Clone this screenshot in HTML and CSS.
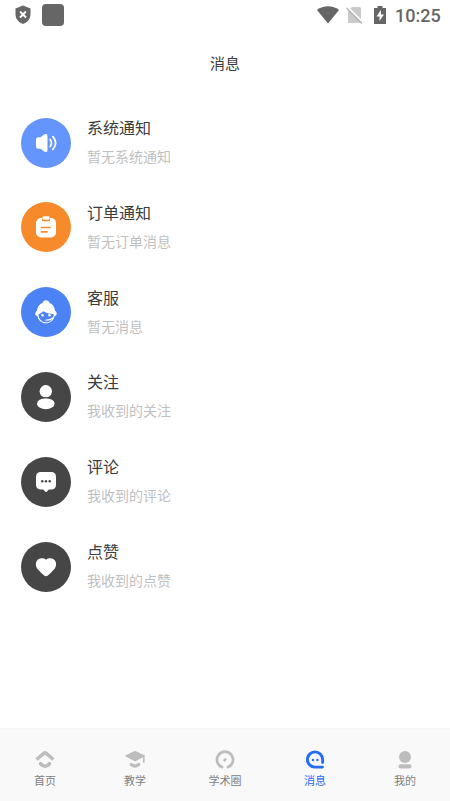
FILE: index.html
```html
<!DOCTYPE html>
<html lang="zh-CN">
<head>
<meta charset="utf-8">
<title>消息</title>
<link rel="stylesheet" href="styles.css">
</head>
<body>
<div class="app">
  <header class="status">
    <svg class="shield" width="18" height="20" viewBox="0 0 18 20"><path d="M9 .5 16.500 3.500V9c0 4.800-3.100 8.600-7.500 10C4.600 17.600 1.500 13.800 1.500 9V3.500Z" fill="#666"/><path d="m6 6.500 6 6m0-6-6 6" stroke="#fff" stroke-width="2"/></svg>
    <span class="block"></span>
    <svg class="wifi" width="22" height="18" viewBox="0 0 22 18"><path d="M0 4C6.500-1 15.500-1 22 4L11 17.500Z" fill="#666"/></svg>
    <svg class="sim" width="17" height="18" viewBox="0 0 17 18"><path d="M6 1h7.500q1.500 0 1.500 1.500V17H2V5Z" fill="#cacaca"/><path d="m1 .7 15.500 15.500" stroke="#fff" stroke-width="2"/><path d="m.5 2 15.500 15.500" stroke="#b4b4b4" stroke-width="1.500"/></svg>
    <svg class="battery" width="12" height="18" viewBox="0 0 12 18"><path d="M3.500 0h5v2H12v16H0V2h3.500Z" fill="#666"/><path d="M7 4 2.500 10.500h3V15L10 8.500H7Z" fill="#fff"/></svg>
    <time class="clock">10:25</time>
  </header>
  <h1 class="title">消息</h1>
  <main class="list">
    <section class="row">
      <svg class="avatar" viewBox="0 0 50 50"><circle cx="25" cy="25" r="25" fill="#6495fd"/><path d="M17.500 19.200h2L23.500 16.300q3-1.300 3 1.700v14q0 3-3 1.700l-4-2.900h-2q-2.500 0-2.500-2.500v-6.600q0-2.500 2.500-2.500Z" fill="#fff"/><path d="M29.200 21.500q2.600 3.500 0 7M31.900 18.700q5.500 6.300 0 12.600" fill="none" stroke="#fff" stroke-width="1.800" stroke-linecap="round"/></svg>
      <div class="text"><h2>系统通知</h2><p>暂无系统通知</p></div>
    </section>
    <section class="row">
      <svg class="avatar" viewBox="0 0 50 50"><circle cx="25" cy="25" r="25" fill="#f78a2b"/><rect x="15" y="16" width="20" height="19.500" rx="5" fill="#fff"/><path d="M21 15.500v2.500q0 1.200 1.200 1.200h5.600q1.200 0 1.200-1.200v-2.500Z" fill="#f78a2b"/><rect x="21.500" y="14.300" width="7" height="3.500" rx="1.200" fill="#fff"/><path d="M20.500 25.500h8.500M20.500 29.800h5.500" stroke="#f78a2b" stroke-width="1.700" stroke-linecap="round"/></svg>
      <div class="text"><h2>订单通知</h2><p>暂无订单消息</p></div>
    </section>
    <section class="row">
      <svg class="avatar" viewBox="0 0 50 50"><circle cx="25" cy="25" r="25" fill="#4b83f5"/><path d="M16.300 29c-3-.8-2.300-4-.3-5.300.3-4 2.500-6.700 5.500-7.700 1-3.600 6-3.600 7 0 3 1 5.200 3.700 5.500 7.700 2 1.300 2.700 4.500-.3 5.300-1 4.300-4.400 7.300-8.700 7.300s-7.700-3-8.700-7.300Z" fill="#fff"/><path d="M17.500 27.300c2-.5 3.500-1.600 4.500-3 3 1.700 6.500 2.500 10.500 2.700.5 4.800-3 8.300-7.500 8.300-4.200 0-7.300-3.300-7.500-8Z" fill="#4b83f5"/><circle cx="21.500" cy="28.300" r="1.300" fill="#fff"/><circle cx="28.500" cy="28.300" r="1.300" fill="#fff"/><path d="M25 33.200q3.800.2 7.200-2.500" fill="none" stroke="#fff" stroke-width="1.200" stroke-linecap="round"/></svg>
      <div class="text"><h2>客服</h2><p>暂无消息</p></div>
    </section>
    <section class="row">
      <svg class="avatar" viewBox="0 0 50 50"><circle cx="25" cy="25" r="25" fill="#464646"/><circle cx="24.800" cy="19.300" r="6.200" fill="#fff"/><ellipse cx="24.800" cy="31.700" rx="8.800" ry="5.500" fill="#fff"/><path d="M18 25.700h14" stroke="#464646" stroke-width=".8"/></svg>
      <div class="text"><h2>关注</h2><p>我收到的关注</p></div>
    </section>
    <section class="row">
      <svg class="avatar" viewBox="0 0 50 50"><circle cx="25" cy="25" r="25" fill="#464646"/><path d="M20 15h10q5 0 5 5v7.500q0 5-5 5h-2.200L25.700 34.700q-.7.700-1.400 0l-2.100-2.200H20q-5 0-5-5V20q0-5 5-5Z" fill="#fff"/><g fill="#464646"><circle cx="21.300" cy="24.300" r="1.200"/><circle cx="25" cy="24.300" r="1.200"/><circle cx="28.700" cy="24.300" r="1.200"/></g></svg>
      <div class="text"><h2>评论</h2><p>我收到的评论</p></div>
    </section>
    <section class="row">
      <svg class="avatar" viewBox="0 0 50 50"><circle cx="25" cy="25" r="25" fill="#464646"/><path d="M25 17.700c3-2.300 7-1.700 8.900.7 2 2.800 1.300 6.600-1 9.200-1.800 2.200-4 4.200-6 5.900q-1.900 1.500-3.800 0c-2-1.700-4.200-3.700-6-5.900-2.300-2.600-3-6.400-1-9.200 1.900-2.400 5.900-3 8.900-.7Z" fill="#fff"/></svg>
      <div class="text"><h2>点赞</h2><p>我收到的点赞</p></div>
    </section>
  </main>
  <nav class="tabs">
    <a class="tab"><svg viewBox="0 0 20 20" fill="none" stroke="#bdbdbd" stroke-width="3.600"><path d="m1.500 9.500 7.300-6.200q1.200-1 2.400 0l7.300 6.200"/><path d="M5.600 13.700q4.400 5 8.800 0" stroke-linecap="round"/></svg><span>首页</span></a>
    <a class="tab"><svg viewBox="0 0 20 20"><path d="M9 1.300q1-.4 2 0l8.300 3.900q1 .6 0 1.200L11 11q-1 .5-2 0L.7 6.400q-1-.6 0-1.200Z" fill="#bdbdbd"/><path d="M18.800 6v6" stroke="#bdbdbd" stroke-width="1.700" stroke-linecap="round"/><path d="M6.300 14.500q3.700 3 7.400 0" fill="none" stroke="#bdbdbd" stroke-width="3.400" stroke-linecap="round"/></svg><span>教学</span></a>
    <a class="tab"><svg viewBox="0 0 20 20" fill="none" stroke="#bdbdbd" stroke-linecap="round"><path d="M7 17.100a8 8 0 1 1 6 0" stroke-width="2.700"/><path d="m9.600 10.200.8-.8" stroke-width="2.700"/></svg><span>学术圈</span></a>
    <a class="tab active"><svg viewBox="0 0 20 20"><path d="M17.600 12.500V9.500a7.600 7.600 0 1 0-7.600 7.600h7.500" fill="none" stroke="#256cf4" stroke-width="2.900" stroke-linecap="round"/><circle cx="7.900" cy="10" r="1.200" fill="#256cf4"/><circle cx="12.400" cy="10" r="1.200" fill="#256cf4"/></svg><span>消息</span></a>
    <a class="tab"><svg viewBox="0 0 20 20" fill="#bdbdbd"><circle cx="10" cy="7" r="6"/><rect x="3.500" y="14.200" width="13" height="4.300" rx="2.100"/></svg><span>我的</span></a>
  </nav>
</div>
</body>
</html>
```
FILE: styles.css
```css
* { box-sizing: border-box; margin: 0; padding: 0; }
body { background: #fff; font-family: "Noto Sans CJK SC", sans-serif; }
.app { width: 450px; height: 801px; display: flex; flex-direction: column; overflow: hidden; }
.status { height: 30px; flex: none; display: flex; align-items: center; padding: 0 10px 0 14px; }
.block { width: 22px; height: 22px; margin-left: 10px; border-radius: 4px; background: #666; }
.wifi { margin-left: auto; }
.sim { margin-left: 7px; }
.battery { margin-left: 11px; }
.clock { margin: 2px 0 0 9px; font: 500 18px/28px Roboto, sans-serif; color: #666; width: 45px; white-space: nowrap; }
.title { height: 66px; flex: none; font-size: 15px; font-weight: 400; line-height: 66px; text-align: center; color: #3c3c3c; }
.list { flex: 1; padding: 4.1px 21px 0; }
.row { height: 84.9px; display: flex; align-items: center; }
.avatar { width: 50px; height: 50px; flex: none; }
.text { margin: 0 0 1.6px 16px; }
.text h2 { font-size: 16px; font-weight: 400; line-height: 29px; color: #3c3c3c; }
.text p { font-size: 14px; line-height: 29px; color: #bfbfbf; }
.tabs { height: 73px; flex: none; display: flex; background: #f9f9f9; border-top: 1px solid #f5f5f5; }
.tab { flex: 1; display: flex; flex-direction: column; align-items: center; padding-top: 21px; font-size: 11px; line-height: 16px; color: #808080; }
.tab svg { width: 20px; height: 20px; margin-bottom: 2px; }
.tab.active { color: #256cf4; }
```
